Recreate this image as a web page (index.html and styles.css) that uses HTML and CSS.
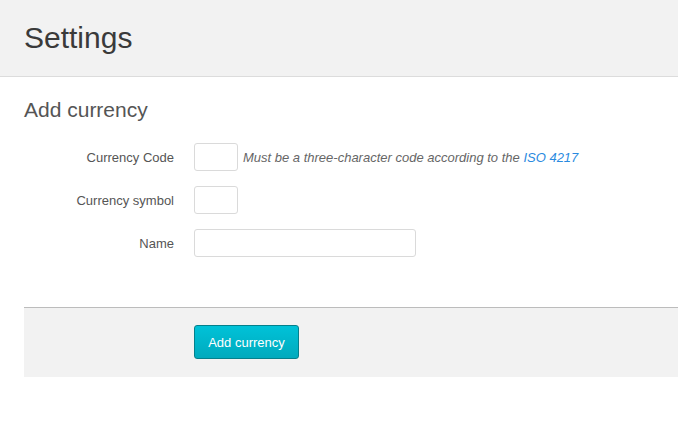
FILE: index.html
```html
<!DOCTYPE html>
<html>
<head>
<meta charset="utf-8">
<link rel="stylesheet" href="styles.css">
</head>
<body>
<header class="page-header">
  <h1 class="page-title">Settings</h1>
</header>
<main class="content">
  <h2 class="section-title">Add currency</h2>
  <form class="form">
    <div class="row">
      <label class="label">Currency Code</label>
      <input class="input input-small" type="text">
      <span class="help">Must be a three-character code according to the <a class="link" href="#">ISO 4217</a></span>
    </div>
    <div class="row">
      <label class="label">Currency symbol</label>
      <input class="input input-small" type="text">
    </div>
    <div class="row">
      <label class="label">Name</label>
      <input class="input input-wide" type="text">
    </div>
    <div class="actions">
      <button class="btn" type="button">Add currency</button>
    </div>
  </form>
</main>
</body>
</html>
```
FILE: styles.css
```css
html, body {
  margin: 0;
  padding: 0;
  background: #fff;
  font-family: "Liberation Sans", Arial, sans-serif;
}
.page-header {
  background: #f2f2f2;
  border-bottom: 1px solid #dcdcdc;
  height: 77px;
  box-sizing: border-box;
  padding: 21px 24px 0;
}
.page-title {
  margin: 0;
  font-size: 30px;
  line-height: 33px;
  font-weight: normal;
  color: #3a3a3a;
}
.content {
  padding: 0 0 0 24px;
}
.section-title {
  margin: 21px 0 0;
  font-size: 21px;
  line-height: 24px;
  font-weight: normal;
  color: #555;
}
.form {
  margin-top: 21px;
}
.row {
  display: flex;
  align-items: center;
  height: 28px;
  margin-bottom: 15px;
}
.label {
  width: 150px;
  text-align: right;
  font-size: 13px;
  color: #555;
  margin-right: 20px;
}
.input {
  box-sizing: border-box;
  height: 28px;
  border: 1px solid #dadada;
  border-radius: 3px;
  background: #fff;
  margin: 0;
  padding: 0 6px;
}
.input-small {
  width: 44px;
}
.input-wide {
  width: 222px;
}
.help {
  margin-left: 5px;
  font-size: 13px;
  font-style: italic;
  color: #666;
}
.link {
  color: #2a8ae0;
  text-decoration: none;
}
.actions {
  margin-top: 50px;
  border-top: 1px solid #bcbcbc;
  background: #f2f2f2;
  padding: 17px 0 18px 170px;
}
.btn {
  box-sizing: border-box;
  width: 105px;
  height: 34px;
  border: 1px solid #04808c;
  border-radius: 3px;
  background: linear-gradient(#00c2d8, #00aabd);
  color: #fff;
  font-family: "Liberation Sans", Arial, sans-serif;
  font-size: 13px;
  padding: 0;
  display: block;
}
```
